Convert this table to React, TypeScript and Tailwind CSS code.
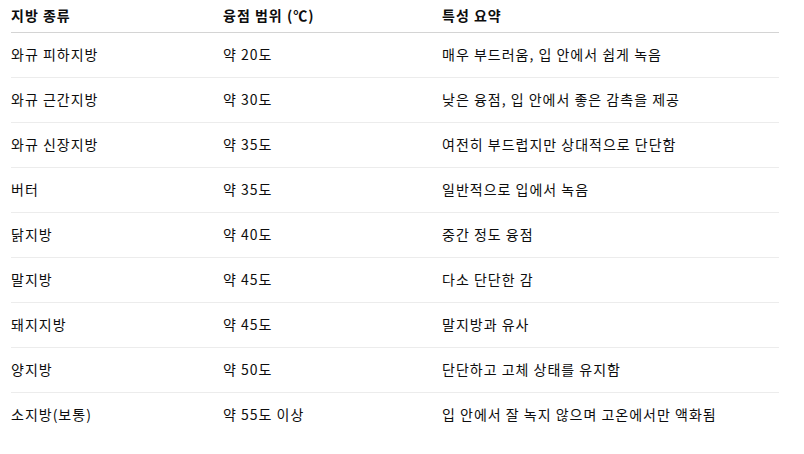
import React from 'react';

const rows = [
  ['와규 피하지방', '약 20도', '매우 부드러움, 입 안에서 쉽게 녹음'],
  ['와규 근간지방', '약 30도', '낮은 융점, 입 안에서 좋은 감촉을 제공'],
  ['와규 신장지방', '약 35도', '여전히 부드럽지만 상대적으로 단단함'],
  ['버터', '약 35도', '일반적으로 입에서 녹음'],
  ['닭지방', '약 40도', '중간 정도 융점'],
  ['말지방', '약 45도', '다소 단단한 감'],
  ['돼지지방', '약 45도', '말지방과 유사'],
  ['양지방', '약 50도', '단단하고 고체 상태를 유지함'],
  ['소지방(보통)', '약 55도 이상', '입 안에서 잘 녹지 않으며 고온에서만 액화됨'],
];

export default function App() {
  return (
    <div
      className="w-[804px] h-[454px] bg-white pl-[11px] text-[14px] tracking-[1px] text-[#0d0d0d]"
      style={{ fontFamily: '"Noto Sans CJK KR", "Liberation Sans", sans-serif' }}
    >
      <table className="w-[768px] table-fixed border-collapse">
        <colgroup>
          <col className="w-[212px]" />
          <col className="w-[219px]" />
          <col />
        </colgroup>
        <thead>
          <tr className="h-[32px] border-b border-[#d4d4d4]">
            <th className="text-left font-bold align-middle pb-[1px]">지방 종류</th>
            <th className="text-left font-bold align-middle pb-[1px]">융점 범위 (℃)</th>
            <th className="text-left font-bold align-middle pb-[1px]">특성 요약</th>
          </tr>
        </thead>
        <tbody>
          {rows.map((r, i) => (
            <tr
              key={i}
              className={i < rows.length - 1 ? 'h-[45px] border-b border-[#ececec]' : 'h-[45px]'}
            >
              {r.map((c, j) => (
                <td key={j} className="align-middle">
                  {c}
                </td>
              ))}
            </tr>
          ))}
        </tbody>
      </table>
    </div>
  );
}
